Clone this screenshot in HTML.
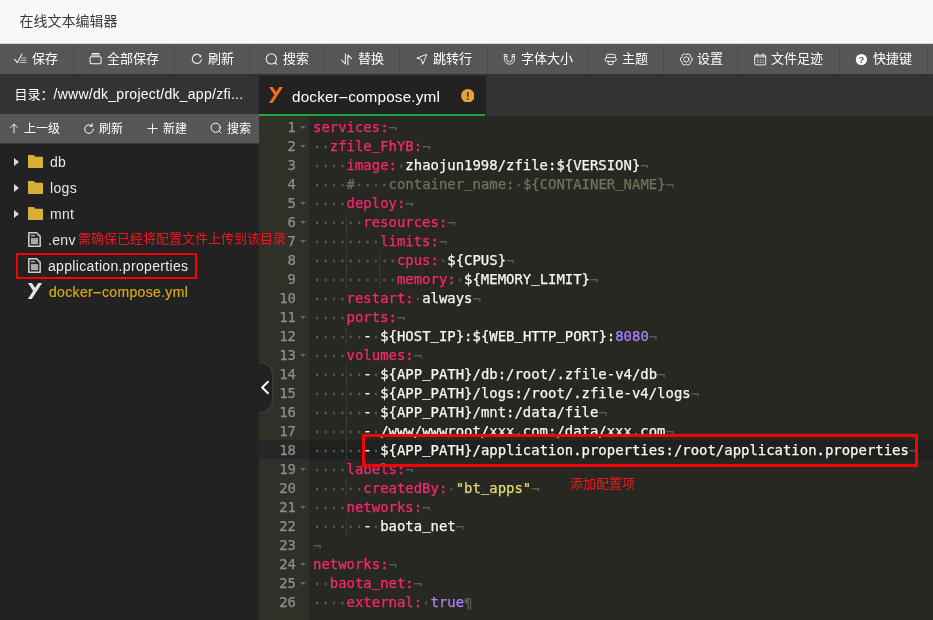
<!DOCTYPE html>
<html lang="zh">
<head>
<meta charset="utf-8">
<title>在线文本编辑器</title>
<style>
*{box-sizing:border-box;margin:0;padding:0}
html,body{width:933px;height:620px;overflow:hidden;background:#272822}
body{font-family:"Liberation Sans","Noto Sans CJK SC",sans-serif;position:relative;will-change:transform}
#hd{position:absolute;left:0;top:0;width:933px;height:44px;background:#f8f8f8;border-bottom:1px solid #d8d8d8;color:#3a3a3a;font-size:14px;line-height:43px;padding-left:19.500px}
#tb{position:absolute;left:0;top:44px;width:933px;height:30px;background:#565656;color:#fff;font-size:13px;line-height:30px;white-space:nowrap}
#tb .b{position:absolute;top:0;height:30px;border-right:1px solid #4b4b4b}
#tb .b svg{position:absolute;left:15px;top:7.5px;width:13px;height:13px;fill:none;stroke:#f4f4f4;stroke-width:1.05;stroke-linecap:round;stroke-linejoin:round;overflow:visible}
#tb .b span{position:absolute;left:33px;top:0;white-space:nowrap}
#side{position:absolute;left:0;top:74px;width:259px;height:546px;background:#222}
#path{position:absolute;left:0;top:0;width:259px;height:40px;background:#333;color:#fff;font-size:14px;line-height:41px;padding-left:14.500px;white-space:nowrap;font-variant-ligatures:none}
#stb{position:absolute;left:0;top:40px;width:259px;height:30px;background:#565656;border-bottom:1px solid #383838;color:#fff;font-size:12px;line-height:31px}
#stb span{position:absolute;top:0;white-space:nowrap}
#stb svg{position:absolute;top:8px;width:12px;height:12px;fill:none;stroke:#fff;stroke-width:1;stroke-linecap:round;stroke-linejoin:round;overflow:visible}
#tree{position:absolute;left:0;top:69px;letter-spacing:.33px;width:259px;color:#e6e6e6;font-size:14px}
.row{position:absolute;left:0;height:26px;line-height:26px;white-space:nowrap}
.row span{position:absolute;top:0;white-space:nowrap}
.row svg{position:absolute}
.tri{position:absolute;width:0;height:0;border-left:5px solid #ddd;border-top:4px solid transparent;border-bottom:4px solid transparent}
#tabs{position:absolute;left:259px;top:74px;width:674px;height:42px;background:#333}
#tab{position:absolute;left:0;top:1px;width:227px;height:41px;border-top:1px solid #2b2b2b;background:linear-gradient(#20a53a,#20a53a) 0 100%/226px 2px no-repeat #222;color:#fff;font-size:15.3px;line-height:41px}
#tab span{position:absolute;left:33px;top:0;white-space:nowrap;letter-spacing:.16px}
#ed{position:absolute;left:259px;top:116px;width:674px;height:504px;background:#272822;overflow:hidden}
#gut{position:absolute;left:0;top:0;width:50px;height:504px;background:#2f3129;color:#8f908a}
.code{font-family:"DejaVu Sans Mono","Liberation Mono",monospace;font-size:13.95px;line-height:19px;-webkit-text-stroke:.25px}
#gut div{position:absolute;left:0;width:37px;text-align:right;height:19px;margin-top:1px}
#gut b{position:absolute;left:41px;width:0;height:0;margin-top:1px;border-top:3px solid #65665f;border-left:3px solid transparent;border-right:3px solid transparent}
#act{position:absolute;left:0;top:324px;width:674px;height:19px;background:#202020}
#gut #gact{position:absolute;left:0;top:324px;width:50px;height:19px;background:#272727;margin:0}
#lines{position:absolute;left:54px;top:2px;color:#f8f8f2;white-space:pre}
#lines div{height:19px}
#lines i{font-style:normal;color:#5a5b55;position:relative;top:1px}
#lines s{text-decoration:none;position:relative;top:-2px}
#ed u{position:absolute;width:1px;height:19px;background:repeating-linear-gradient(to bottom,#4a4b44 0,#4a4b44 1px,transparent 1px,transparent 2px)}
.k{color:#f92672}.c{color:#75715e}.s{color:#e6db74}.n{color:#ae81ff}
em{font-style:normal;display:inline-block;transform:scaleX(2.1);margin:0 2px}
.red{position:absolute;border:3px solid #f5000a}
.note{position:absolute;color:#f5141e;font-size:12px;white-space:nowrap;line-height:14px}
#collapse{position:absolute;left:259px;top:362px;width:14px;height:51px;background:#222;border-radius:0 13px 13px 0;border:1px solid #40413b;border-left:0}
</style>
</head>
<body>
<div id="hd">在线文本编辑器</div>
<div id="tb">
<div class="b" style="left:-1px;width:75px"><svg viewBox="0 0 13 13"><path d="M0.6 7.4L3.3 10.7L8 1.9"/><path d="M8 6h4M7 8.300h5M6 10.600h6" stroke-width="0.700"/></svg><span>保存</span></div>
<div class="b" style="left:74px;width:101px"><svg viewBox="0 0 13 13"><rect x="1.100" y="4.700" width="11" height="7" rx="1.100"/><path d="M2.500 3h8.200M3.400 1.500h6.400"/></svg><span>全部保存</span></div>
<div class="b" style="left:175px;width:75px"><svg viewBox="0 0 13 13"><path d="M9.860 3.380A4.600 4.600 0 1 0 11.460 7.540"/><path d="M11.300 2.600V5.300H8.800Z" fill="#f4f4f4" stroke="none"/></svg><span>刷新</span></div>
<div class="b" style="left:250px;width:75px"><svg viewBox="0 0 13 13"><circle cx="6.300" cy="6.900" r="5.100"/><path d="M9.900 10.500l1.900 1.800"/></svg><span>搜索</span></div>
<div class="b" style="left:325px;width:75px"><svg viewBox="0 0 13 13"><path d="M5.400 1.800V12L1.600 8.200M7.900 12.800V2.900L11.600 6.600"/></svg><span>替换</span></div>
<div class="b" style="left:400px;width:88px"><svg viewBox="0 0 13 13"><path d="M11.500 2.400L1.800 6.100L6.400 7.500L7.700 11.900Z" stroke-width="0.950"/></svg><span>跳转行</span></div>
<div class="b" style="left:488px;width:101px"><svg viewBox="0 0 13 13"><path d="M1.500 2.500H3.800V7.200A2.700 2.700 0 0 0 9.200 7.200V2.500H11.500V7.200A5 5 0 0 1 1.500 7.200ZM1.500 4.500H3.800M9.200 4.500H11.500" stroke-width="0.900"/></svg><span>字体大小</span></div>
<div class="b" style="left:589px;width:75px"><svg viewBox="0 0 13 13"><path d="M2.500 5.500V3.500Q2.500 2.300 3.700 2.300H10Q11.200 2.300 11.200 3.500V5.500" stroke-width="0.950"/><rect x="1.100" y="5.600" width="11" height="3.800" rx="1.500" stroke-width="0.950"/><path d="M4.200 9.400V11.600Q4.200 12.600 5.200 12.600H8Q9 12.600 9 11.600V9.400" stroke-width="0.950"/></svg><span>主题</span></div>
<div class="b" style="left:664px;width:74px"><svg viewBox="0 0 13 13"><circle cx="7.3" cy="7.4" r="2.600" stroke-width="0.950"/><path d="M8.95 1.63L11.47 3.08L11.21 4.45L11.81 5.49L13.12 5.95L13.12 8.85L11.81 9.31L11.21 10.35L11.47 11.72L8.95 13.17L7.90 12.26L6.70 12.26L5.65 13.17L3.13 11.72L3.39 10.35L2.79 9.31L1.48 8.85L1.48 5.95L2.79 5.49L3.39 4.45L3.13 3.08L5.65 1.63L6.70 2.54L7.90 2.54Z" stroke-width="0.950"/></svg><span>设置</span></div>
<div class="b" style="left:738px;width:102px"><svg viewBox="0 0 13 13"><rect x="1.700" y="3.200" width="11" height="9.700" rx="0.900" stroke-width="0.950"/><path d="M1.700 4.900h11M4.200 1.700v2.500M10.200 1.700v2.500" stroke-width="0.900"/><path d="M4.100 8h1.300M6.800 8h1.300M9.400 8h1.300M4.100 10.200h1.300M6.800 10.200h1.300M9.400 10.200h1.300" stroke-width="1" stroke-linecap="butt"/></svg><span>文件足迹</span></div>
<div class="b" style="left:840px;width:88px"><svg viewBox="0 0 13 13"><circle cx="6.400" cy="7.500" r="5.600" fill="#fff" stroke="none"/><text x="6.400" y="10.700" text-anchor="middle" font-size="9.500" font-weight="bold" fill="#565656" stroke="none" font-family="Liberation Sans,sans-serif">?</text></svg><span>快捷键</span></div>
</div>
<div id="side">
  <div id="path"><span style="font-size:13px">目录：</span><span style="letter-spacing:.27px">/www/dk_project/dk_app/zfi...</span></div>
  <div id="stb">
    <svg style="left:9px" viewBox="0 0 12 12"><path d="M5 10.800V2.200M1.700 5.400L5 2.100L8.300 5.400" stroke-width="0.900"/></svg><span style="left:24px">上一级</span>
    <svg style="left:83px;top:9px" viewBox="0 0 12 12"><path d="M10.300 6.200a4.300 4.300 0 1 1-1.400-3.300"/><path d="M9.200 0.800v2.400h-2.400"/></svg><span style="left:99px">刷新</span>
    <svg style="left:147px" viewBox="0 0 12 12"><path d="M5.500 1.800v9.400M0.800 6.500h9.400" stroke-width="0.900"/></svg><span style="left:163px">新建</span>
    <svg style="left:210px" viewBox="0 0 12 12"><circle cx="5.700" cy="5.700" r="4.600"/><path d="M9.200 9.200l1.800 1.800"/></svg><span style="left:227px">搜索</span>
  </div>
  <div id="tree">
    <div class="row" style="top:6px"><div class="tri" style="left:14px;top:9px"></div><svg style="left:28px;top:6px" width="15" height="13" viewBox="0 0 15 13"><path d="M0 1.200Q0 0 1.200 0H5.500L7 2H13.800Q15 2 15 3.200V11.800Q15 13 13.800 13H1.200Q0 13 0 11.800z" fill="#dbae36" stroke="#e3b63b" stroke-width="0.600"/></svg><span style="left:50px">db</span></div>
    <div class="row" style="top:32px"><div class="tri" style="left:14px;top:9px"></div><svg style="left:28px;top:6px" width="15" height="13" viewBox="0 0 15 13"><path d="M0 1.200Q0 0 1.200 0H5.500L7 2H13.800Q15 2 15 3.200V11.800Q15 13 13.800 13H1.200Q0 13 0 11.800z" fill="#dbae36" stroke="#e3b63b" stroke-width="0.600"/></svg><span style="left:50px">logs</span></div>
    <div class="row" style="top:58px"><div class="tri" style="left:14px;top:9px"></div><svg style="left:28px;top:6px" width="15" height="13" viewBox="0 0 15 13"><path d="M0 1.200Q0 0 1.200 0H5.500L7 2H13.800Q15 2 15 3.200V11.800Q15 13 13.800 13H1.200Q0 13 0 11.800z" fill="#dbae36" stroke="#e3b63b" stroke-width="0.600"/></svg><span style="left:50px">mnt</span></div>
    <div class="row" style="top:84px"><svg style="left:27.500px;top:5px" width="13" height="15" viewBox="0 0 13 15"><path d="M0.800 0.800H8.600L12.200 4.400V14.200H0.800Z" fill="#2b2b2b" stroke="#cfcfcf" stroke-width="1.500" stroke-linejoin="round"/><path d="M3 3.700h3.800" stroke="#c8c8c8" stroke-width="1.200"/><rect x="3" y="6.200" width="7" height="5.800" fill="#8e8e8e"/><path d="M3 6.800h7M3 8.400h7M3 10h7M3 11.500h7" stroke="#c0c0c0" stroke-width="0.900"/></svg><span style="left:48px">.env</span></div>
    <div class="row" style="top:110px"><svg style="left:27.500px;top:5px" width="13" height="15" viewBox="0 0 13 15"><path d="M0.800 0.800H8.600L12.200 4.400V14.200H0.800Z" fill="#2b2b2b" stroke="#cfcfcf" stroke-width="1.500" stroke-linejoin="round"/><path d="M3 3.700h3.800" stroke="#c8c8c8" stroke-width="1.200"/><rect x="3" y="6.200" width="7" height="5.800" fill="#8e8e8e"/><path d="M3 6.800h7M3 8.400h7M3 10h7M3 11.500h7" stroke="#c0c0c0" stroke-width="0.900"/></svg><span style="left:48px;color:#ececec">application.properties</span></div>
    <div class="row" style="top:136px"><svg style="left:28px;top:4px" width="14" height="16" viewBox="0 0 14.200 16"><path d="M0.700 -2L7.300 8M13.600 -2L0.500 18.200" fill="none" stroke="#e4e4e4" stroke-width="3.300"/></svg><span style="left:49px;color:#d8ab10;-webkit-text-stroke:.2px">docker<em>-</em>compose.yml</span></div>
  </div>
</div>
<div id="tabs"><div id="tab"><svg style="position:absolute;left:10px;top:11.300px" width="14" height="16" viewBox="0 0 14.200 16"><path d="M0.700 -2L7.300 8M13.600 -2L0.500 18.200" fill="none" stroke="#f26d21" stroke-width="3.100"/></svg><span>docker<em>-</em>compose.yml</span><svg style="position:absolute;left:201.700px;top:12.700px" width="13.600" height="13.600" viewBox="0 0 14 14"><circle cx="7" cy="7" r="7" fill="#e6a23c"/><rect x="6.300" y="3" width="1.400" height="5.200" rx="0.700" fill="#222"/><circle cx="7" cy="10.300" r="0.900" fill="#222"/></svg></div></div>
<div id="ed">
  <div id="act"></div>
  <div id="gut" class="code"><div id="gact"></div><div style="top:1px">1</div><b style="top:9px"></b><div style="top:20px">2</div><b style="top:28px"></b><div style="top:39px">3</div><div style="top:58px">4</div><div style="top:77px">5</div><b style="top:85px"></b><div style="top:96px">6</div><b style="top:104px"></b><div style="top:115px">7</div><b style="top:123px"></b><div style="top:134px">8</div><div style="top:153px">9</div><div style="top:172px">10</div><div style="top:191px">11</div><b style="top:199px"></b><div style="top:210px">12</div><div style="top:229px">13</div><b style="top:237px"></b><div style="top:248px">14</div><div style="top:267px">15</div><div style="top:286px">16</div><div style="top:305px">17</div><div style="top:324px">18</div><div style="top:343px">19</div><b style="top:351px"></b><div style="top:362px">20</div><div style="top:381px">21</div><b style="top:389px"></b><div style="top:400px">22</div><div style="top:419px">23</div><div style="top:438px">24</div><b style="top:446px"></b><div style="top:457px">25</div><b style="top:465px"></b><div style="top:476px">26</div></div>
  <u style="left:86.6px;top:96px"></u><u style="left:86.6px;top:115px"></u><u style="left:86.6px;top:134px"></u><u style="left:120.2px;top:134px"></u><u style="left:86.6px;top:153px"></u><u style="left:120.2px;top:153px"></u><u style="left:86.6px;top:210px"></u><u style="left:86.6px;top:248px"></u><u style="left:86.6px;top:267px"></u><u style="left:86.6px;top:286px"></u><u style="left:86.6px;top:305px"></u><u style="left:86.6px;top:324px"></u><u style="left:86.6px;top:362px"></u><u style="left:86.6px;top:400px"></u>
  <div id="lines" class="code"><div><span class="k">services:</span><i>¬</i></div><div><i>··</i><span class="k">zfile<s>_</s>FhYB:</span><i>¬</i></div><div><i>····</i><span class="k">image:</span><i>·</i>zhaojun1998/zfile:${VERSION}<i>¬</i></div><div><i>····</i><span class="c">#<i>····</i>container<s>_</s>name:<i>·</i>${CONTAINER<s>_</s>NAME}</span><i>¬</i></div><div><i>····</i><span class="k">deploy:</span><i>¬</i></div><div><i>······</i><span class="k">resources:</span><i>¬</i></div><div><i>········</i><span class="k">limits:</span><i>¬</i></div><div><i>··········</i><span class="k">cpus:</span><i>·</i>${CPUS}<i>¬</i></div><div><i>··········</i><span class="k">memory:</span><i>·</i>${MEMORY<s>_</s>LIMIT}<i>¬</i></div><div><i>····</i><span class="k">restart:</span><i>·</i>always<i>¬</i></div><div><i>····</i><span class="k">ports:</span><i>¬</i></div><div><i>······</i>-<i>·</i>${HOST<s>_</s>IP}:${WEB<s>_</s>HTTP<s>_</s>PORT}:<span class="n">8080</span><i>¬</i></div><div><i>····</i><span class="k">volumes:</span><i>¬</i></div><div><i>······</i>-<i>·</i>${APP<s>_</s>PATH}/db:/root/.zfile-v4/db<i>¬</i></div><div><i>······</i>-<i>·</i>${APP<s>_</s>PATH}/logs:/root/.zfile-v4/logs<i>¬</i></div><div><i>······</i>-<i>·</i>${APP<s>_</s>PATH}/mnt:/data/file<i>¬</i></div><div><i>······</i>-<i>·</i>/www/wwwroot/xxx.com:/data/xxx.com<i>¬</i></div><div><i>······</i>-<i>·</i>${APP<s>_</s>PATH}/application.properties:/root/application.properties<i>¬</i></div><div><i>····</i><span class="k">labels:</span><i>¬</i></div><div><i>······</i><span class="k">createdBy:</span><i>·</i><span class="s">&quot;bt<s>_</s>apps&quot;</span><i>¬</i></div><div><i>····</i><span class="k">networks:</span><i>¬</i></div><div><i>······</i>-<i>·</i>baota<s>_</s>net<i>¬</i></div><div><i>¬</i></div><div><span class="k">networks:</span><i>¬</i></div><div><i>··</i><span class="k">baota<s>_</s>net:</span><i>¬</i></div><div><i>····</i><span class="k">external:</span><i>·</i><span class="n">true</span><i>¶</i></div></div>
</div>
<div id="collapse"><svg style="position:absolute;left:2px;top:16px" width="9" height="16" viewBox="0 0 9 16"><path d="M7.500 2.300L1.200 8.500L7.500 14.700" fill="none" stroke="#fff" stroke-width="1.900"/></svg></div>
<div class="red" style="left:362px;top:434px;width:556px;height:33px"></div>
<div class="red" style="left:16px;top:253px;width:181px;height:26px;border-width:2.500px"></div>
<div class="note" style="left:78px;top:232px;font-size:13px">需确保已经将配置文件上传到该目录</div>
<div class="note" style="left:570px;top:477px;font-size:13px">添加配置项</div>
</body>
</html>
